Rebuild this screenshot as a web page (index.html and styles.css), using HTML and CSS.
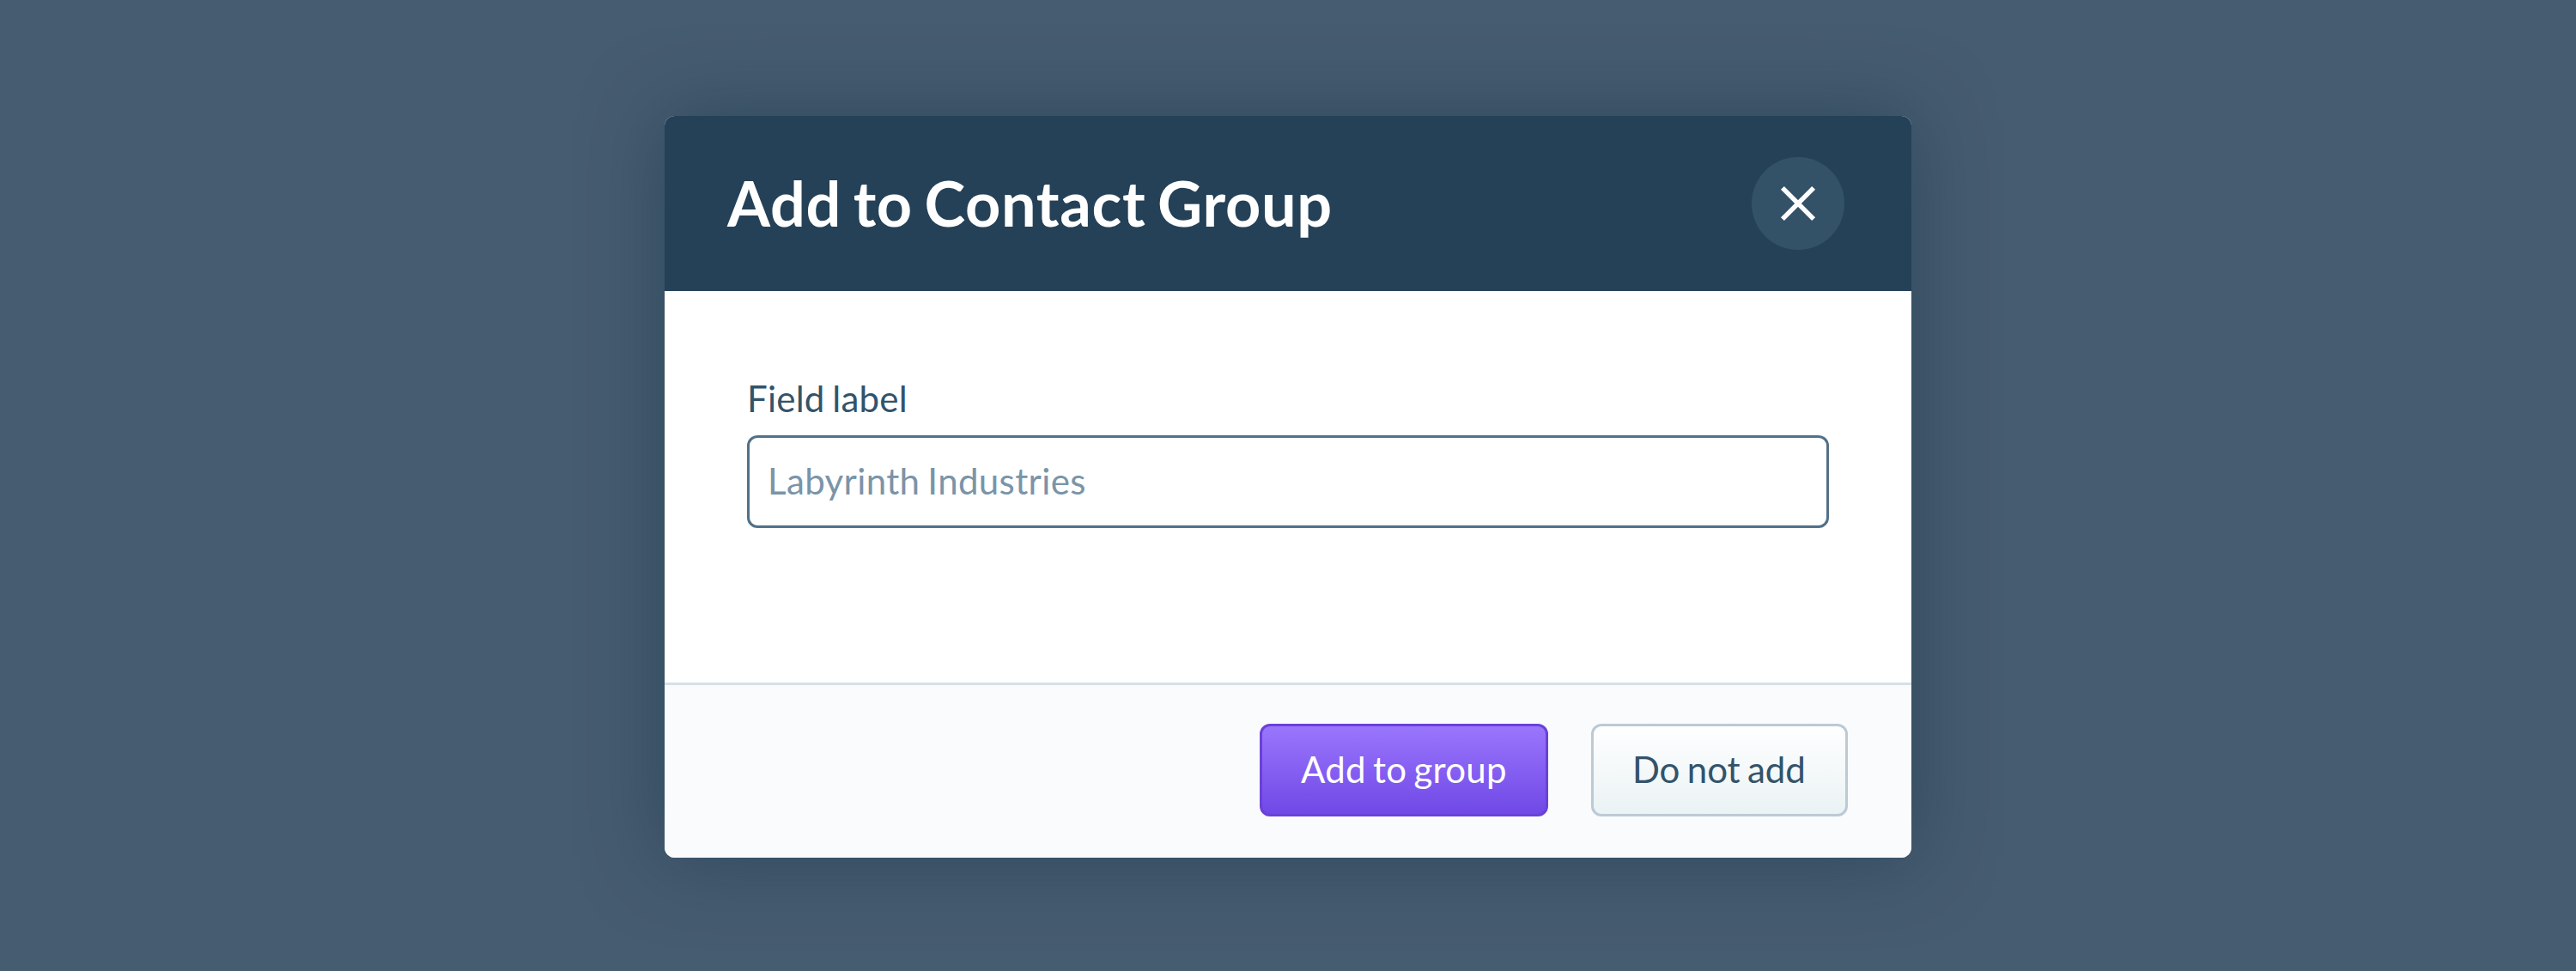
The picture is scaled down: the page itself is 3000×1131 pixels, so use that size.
FILE: index.html
```html
<!DOCTYPE html>
<html lang="en">
<head>
<meta charset="utf-8">
<title>Add to Contact Group</title>
<link rel="stylesheet" href="styles.css">
</head>
<body>
<main class="backdrop">
  <section class="dialog" role="dialog" aria-labelledby="dialog-title">
    <header class="dialog-header">
      <h1 class="dialog-title" id="dialog-title">Add to Contact Group</h1>
      <button class="close" type="button" aria-label="Close">
        <svg class="close-icon" viewBox="0 0 42 42" aria-hidden="true"><path d="M2.9 2.9 39.1 39.1M39.1 2.9 2.9 39.1"/></svg>
      </button>
    </header>
    <div class="dialog-body">
      <label class="field-label" for="group">Field label</label>
      <input class="field-input" id="group" type="text" placeholder="Labyrinth Industries">
    </div>
    <footer class="dialog-footer">
      <button class="button button-primary" type="button">Add to group</button>
      <button class="button button-secondary" type="button">Do not add</button>
    </footer>
  </section>
</main>
</body>
</html>
```
FILE: styles.css
```css
* {
  box-sizing: border-box;
}

body {
  margin: 0;
  background: #465c70;
  font-family: Lato, sans-serif;
  font-size: 42px;
}

.backdrop {
  display: flex;
  justify-content: center;
  align-items: flex-start;
  height: 1131px;
  padding-top: 135px;
}

.dialog {
  display: flex;
  flex-direction: column;
  width: 1452px;
  height: 864px;
  border-radius: 12px;
  background: #fff;
  box-shadow: 0 0 90px rgba(32, 60, 80, 0.62);
  overflow: hidden;
}

.dialog-header {
  display: flex;
  justify-content: space-between;
  align-items: center;
  height: 204px;
  padding: 0 78px 0 73px;
  background: #254157;
}

.dialog-title {
  margin: 0;
  padding-bottom: 2px;
  color: #fff;
  font-size: 72px;
  font-weight: 700;
  line-height: 90px;
  letter-spacing: 0.67px;
  word-spacing: -4.5px;
}

.close {
  display: flex;
  justify-content: center;
  align-items: center;
  width: 108px;
  height: 108px;
  padding: 0;
  border: 0;
  border-radius: 50%;
  background: #345267;
}

.close-icon {
  width: 42px;
  height: 42px;
  fill: none;
  stroke: #fff;
  stroke-width: 5.5;
}

.dialog-body {
  flex: 1;
  display: flex;
  flex-direction: column;
  padding: 95px 96px 0;
}

.field-label {
  margin-bottom: 13px;
  color: #33536a;
  line-height: 60px;
  letter-spacing: 0.25px;
  word-spacing: -2.3px;
}

.field-input {
  height: 108px;
  padding: 0 21px 2px;
  border: 3px solid #527188;
  border-radius: 12px;
  background: #fff;
  color: #33536a;
  font: inherit;
  letter-spacing: 0.37px;
  word-spacing: -2.2px;
}

.field-input::placeholder {
  color: #7a94a9;
  opacity: 1;
}

.dialog-footer {
  display: flex;
  justify-content: flex-end;
  gap: 50px;
  height: 204px;
  padding: 45px 74px 48px;
  border-top: 3px solid #d5e0e6;
  background: #fafbfd;
}

.button {
  height: 108px;
  padding: 0 0 2px 45px;
  border: 3px solid;
  border-radius: 12px;
  background-origin: border-box;
  font: inherit;
  text-align: left;
  white-space: nowrap;
}

.button-primary {
  width: 336px;
  border-color: #6a41d8;
  background-image: linear-gradient(#9b77fd, #6f47e6);
  color: #fff;
  letter-spacing: 0.25px;
  word-spacing: -2.8px;
}

.button-secondary {
  width: 299px;
  border-color: #bccad5;
  background-image: linear-gradient(#fff, #eaf2f4);
  color: #33536a;
  letter-spacing: -0.05px;
  word-spacing: -2.3px;
}
```
